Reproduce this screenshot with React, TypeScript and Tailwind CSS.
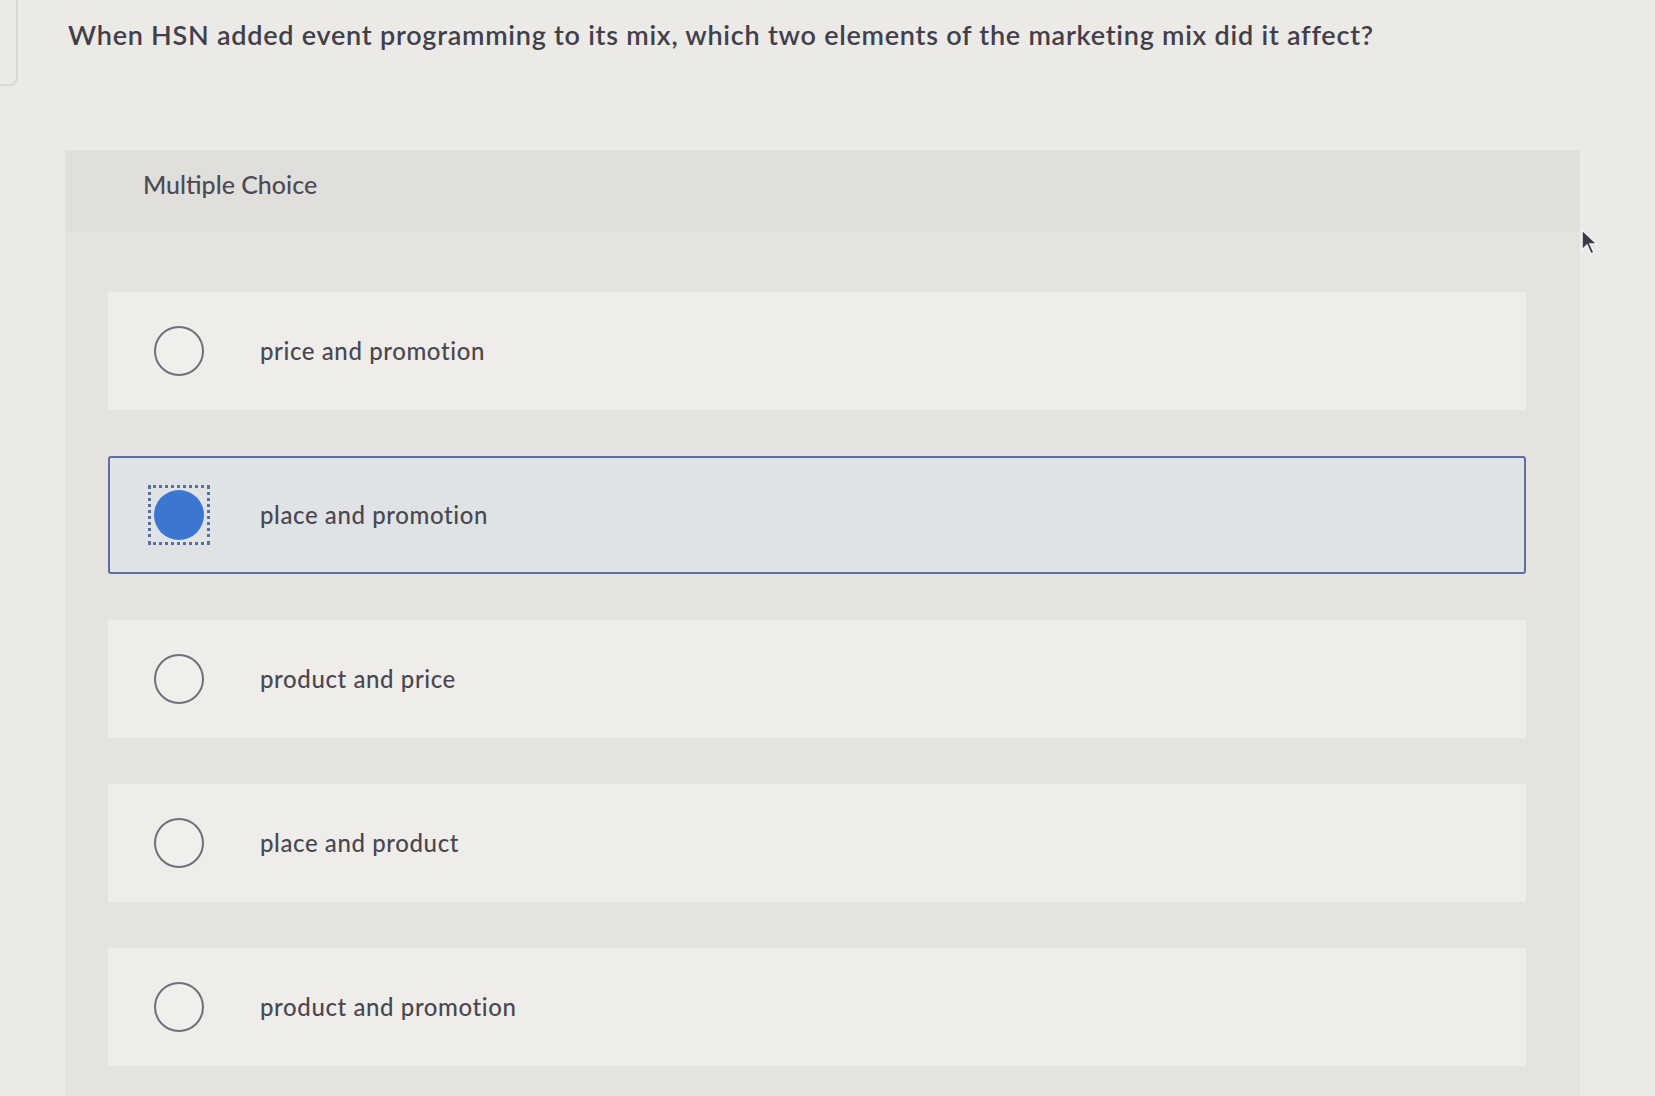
import { useState } from "react";

const options = [
  "price and promotion",
  "place and promotion",
  "product and price",
  "place and product",
  "product and promotion",
];

function Radio({ checked }: { checked: boolean }) {
  if (checked) {
    return (
      <div className="flex h-[60px] w-[62px] items-center justify-center border-[3px] border-dotted border-[#5470a6]">
        <div className="h-[50px] w-[50px] rounded-full bg-[#3b77d0]" />
      </div>
    );
  }
  return (
    <div className="flex h-[60px] w-[62px] items-center justify-center">
      <div className="h-[50px] w-[50px] rounded-full border-2 border-[#726e7c] bg-[#f0efec]" />
    </div>
  );
}

export default function App() {
  const [selected, setSelected] = useState(1);

  return (
    <div
      className="relative min-h-[1096px] overflow-hidden bg-[#ebeae6] text-[#4a4750]"
      style={{ fontFamily: "Lato, 'Open Sans', sans-serif" }}
    >
      {/* edge of a panel behind, top left */}
      <div className="absolute left-[-14px] top-[-10px] h-[96px] w-[32px] rounded-lg border-2 border-[#d8d7d3]" />

      <h1 className="pl-[68px] pt-[18px] text-[27px] leading-[34px] font-semibold tracking-[0.75px] text-[#423f4a]">
        When HSN added event programming to its mix, which two elements of the marketing mix did it affect?
      </h1>

      <section className="ml-[65px] mt-[98px] w-[1515px] rounded-tr-md bg-[#e4e3e0] pb-[40px]">
        <div className="h-[82px] bg-[#e0dfdc] pl-[78px] pt-[19px]">
          <p className="text-[25px] leading-[30px] font-medium text-[#4d4a54]">Multiple Choice</p>
        </div>

        <ul className="flex flex-col gap-[46px] pl-[43px] pr-[54px] pt-[60px]">
          {options.map((label, i) => {
            const checked = selected === i;
            return (
              <li
                key={label}
                onClick={() => setSelected(i)}
                className={
                  checked
                    ? "flex h-[118px] items-center rounded-[3px] border-2 border-[#5f6f9d] bg-[#dfe3e5] pl-[38px]"
                    : "flex h-[118px] items-center border-2 border-transparent bg-[#eeede9] pl-[38px]"
                }
              >
                <Radio checked={checked} />
                <span className="ml-[50px] text-[24px] font-medium tracking-[0.6px] text-[#4a4750]">{label}</span>
              </li>
            );
          })}
        </ul>
      </section>

      {/* mouse cursor */}
      <svg className="absolute left-[1580px] top-[228px]" width="20" height="28" viewBox="0 0 20 28">
        <path d="M2 2 L2 22 L7 17 L11 26 L14 24.5 L10 16 L17 16 Z" fill="#3c3a48" stroke="#f2f2f2" strokeWidth="1.5" />
      </svg>
    </div>
  );
}
